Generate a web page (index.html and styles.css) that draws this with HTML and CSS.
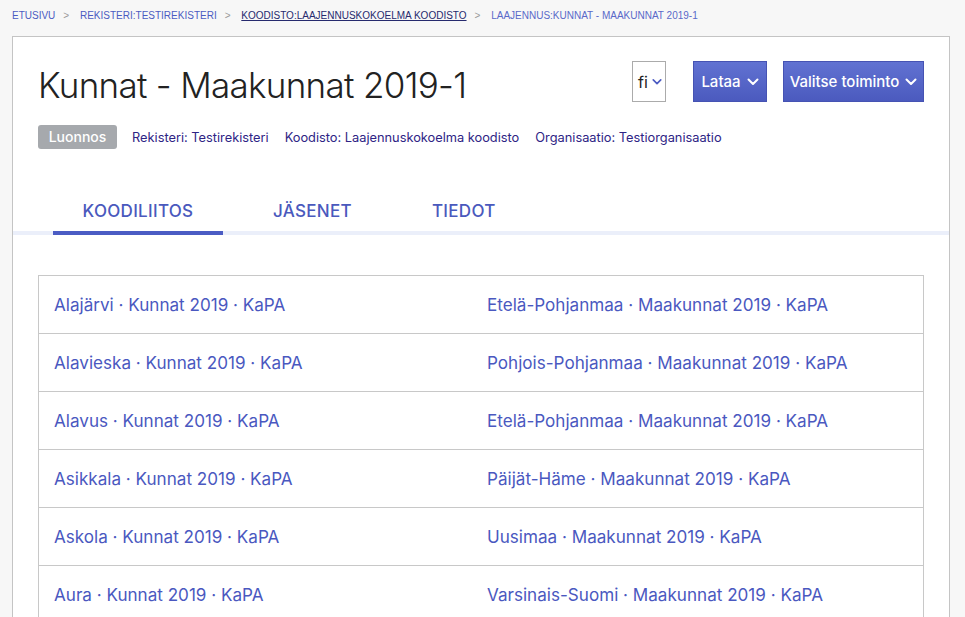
FILE: index.html
```html
<!DOCTYPE html>
<html lang="fi">
<head>
<meta charset="utf-8">
<title>Kunnat - Maakunnat 2019-1</title>
<link rel="stylesheet" href="styles.css">
</head>
<body>
<nav class="crumbs">
  <a class="crumb" href="#">Etusivu</a><span class="sep">&gt;</span>
  <a class="crumb" href="#">Rekisteri:Testirekisteri</a><span class="sep">&gt;</span>
  <a class="crumb current" href="#">Koodisto:Laajennuskokoelma koodisto</a><span class="sep">&gt;</span>
  <span class="crumb last">Laajennus:Kunnat - Maakunnat 2019-1</span>
</nav>
<main class="panel">
  <header class="head">
    <div class="head-top">
      <h1 class="title">Kunnat - Maakunnat 2019-1</h1>
      <div class="actions">
        <button class="lang">fi <svg class="chev" viewBox="0 0 12 8" width="12" height="8"><path d="M1.5 1.5 6 6l4.5-4.5" fill="none" stroke="currentColor" stroke-width="2" stroke-linecap="round" stroke-linejoin="round"/></svg></button>
        <button class="btn lataa">Lataa <svg class="chev" viewBox="0 0 12 8" width="12" height="8"><path d="M1.5 1.5 6 6l4.5-4.5" fill="none" stroke="currentColor" stroke-width="2" stroke-linecap="round" stroke-linejoin="round"/></svg></button>
        <button class="btn valitse">Valitse toiminto <svg class="chev" viewBox="0 0 12 8" width="12" height="8"><path d="M1.5 1.5 6 6l4.5-4.5" fill="none" stroke="currentColor" stroke-width="2" stroke-linecap="round" stroke-linejoin="round"/></svg></button>
      </div>
    </div>
    <div class="meta">
      <span class="badge">Luonnos</span>
      <a class="meta-link" href="#">Rekisteri: Testirekisteri</a>
      <a class="meta-link" href="#">Koodisto: Laajennuskokoelma koodisto</a>
      <a class="meta-link" href="#">Organisaatio: Testiorganisaatio</a>
    </div>
  </header>
  <div class="tabs">
    <a class="tab active" href="#">Koodiliitos</a>
    <a class="tab" href="#">Jäsenet</a>
    <a class="tab" href="#">Tiedot</a>
  </div>
  <section class="list">
    <div class="row"><a href="#">Alajärvi · Kunnat 2019 · KaPA</a><a href="#">Etelä-Pohjanmaa · Maakunnat 2019 · KaPA</a></div>
    <div class="row"><a href="#">Alavieska · Kunnat 2019 · KaPA</a><a href="#">Pohjois-Pohjanmaa · Maakunnat 2019 · KaPA</a></div>
    <div class="row"><a href="#">Alavus · Kunnat 2019 · KaPA</a><a href="#">Etelä-Pohjanmaa · Maakunnat 2019 · KaPA</a></div>
    <div class="row"><a href="#">Asikkala · Kunnat 2019 · KaPA</a><a href="#">Päijät-Häme · Maakunnat 2019 · KaPA</a></div>
    <div class="row"><a href="#">Askola · Kunnat 2019 · KaPA</a><a href="#">Uusimaa · Maakunnat 2019 · KaPA</a></div>
    <div class="row"><a href="#">Aura · Kunnat 2019 · KaPA</a><a href="#">Varsinais-Suomi · Maakunnat 2019 · KaPA</a></div>
  </section>
</main>
</body>
</html>
```
FILE: styles.css
```css
* { box-sizing: border-box; }
html, body { height: 100%; }
body {
  margin: 0;
  background: #f7f7f7;
  font-family: Inter, "Liberation Sans", Arial, sans-serif;
  color: #222;
  overflow: hidden;
}
a { text-decoration: none; }

.crumbs {
  height: 36px;
  padding: 10px 0 0 12px;
  font-family: "Liberation Sans", Arial, sans-serif;
  font-size: 10px;
  line-height: 12px;
  text-transform: uppercase;
  white-space: nowrap;
}
.crumb { color: #4c5bc2; }
.crumb.current { color: #262a6e; text-decoration: underline; }
.crumb.last { color: #5a69c9; }
.sep { color: #9a9a9a; margin: 0 8px 0 8px; }

.panel {
  margin-left: 12px;
  width: 938px;
  min-height: 700px;
  background: #fff;
  border: 1px solid #c4c4c4;
}

.head { padding: 24px 25px 0 25px; }
.head-top {
  display: flex;
  justify-content: space-between;
  align-items: flex-start;
}
.title {
  margin: 3px 0 0 0;
  font-family: Inter, "Liberation Sans", sans-serif;
  font-weight: 300;
  font-size: 35px;
  line-height: 42px;
  letter-spacing: -0.7px;
  color: #222;
}
.actions { display: flex; align-items: center; }
button { font-family: Inter, "Liberation Sans", Arial, sans-serif; cursor: pointer; }
.lang {
  width: 34px;
  height: 41px;
  padding: 0 0 0 2px;
  border: 1px solid #ababab;
  background: #fff;
  color: #222;
  font-size: 16px;
  display: flex;
  align-items: center;
  justify-content: center;
  gap: 4px;
  margin-right: 27px;
}
.lang .chev { color: #4c5bc2; width: 10px; }
.btn {
  height: 41px;
  border: 1px solid #4653b3;
  background: linear-gradient(#6172d2, #4b5abe);
  color: #fff;
  font-size: 15px;
  font-weight: 500;
  display: flex;
  align-items: center;
  justify-content: center;
  gap: 6px;
  padding: 0;
}
.btn .chev { width: 12px; }
.lataa { width: 74px; margin-right: 16px; }
.valitse { width: 141px; }

.meta {
  display: flex;
  align-items: center;
  gap: 16px;
  margin-top: 19px;
  font-size: 12.8px;
}
.badge {
  background: #a6a9ad;
  color: #fff;
  font-size: 14px;
  font-weight: 500;
  width: 79px;
  height: 24px;
  line-height: 24px;
  text-align: center;
  border-radius: 3px;
  margin-right: -1px;
}
.meta-link { color: #2e2485; }

.tabs {
  display: flex;
  gap: 20px;
  margin-top: 40px;
  padding-left: 40px;
  border-bottom: 4px solid #ebeffa;
}
.tab {
  padding: 0 30px;
  height: 46px;
  line-height: 44px;
  font-size: 17px;
  font-weight: 500;
  letter-spacing: 0.3px;
  text-transform: uppercase;
  color: #4a59bd;
  white-space: nowrap;
  margin-bottom: -4px;
  border-bottom: 4px solid transparent;
  text-align: center;
}
.tab.active { border-bottom-color: #4b5cc4; width: 170px; padding: 0; }

.list {
  margin: 40px 25px 0 25px;
  border: 1px solid #c8c8c8;
}
.row {
  display: grid;
  grid-template-columns: 433px 1fr;
  height: 58px;
  align-items: center;
  border-top: 1px solid #c8c8c8;
}
.row:first-child { border-top: 0; height: 57px; }
.row a {
  padding-left: 15px;
  font-size: 17.1px;
  color: #4a58c0;
}
```
